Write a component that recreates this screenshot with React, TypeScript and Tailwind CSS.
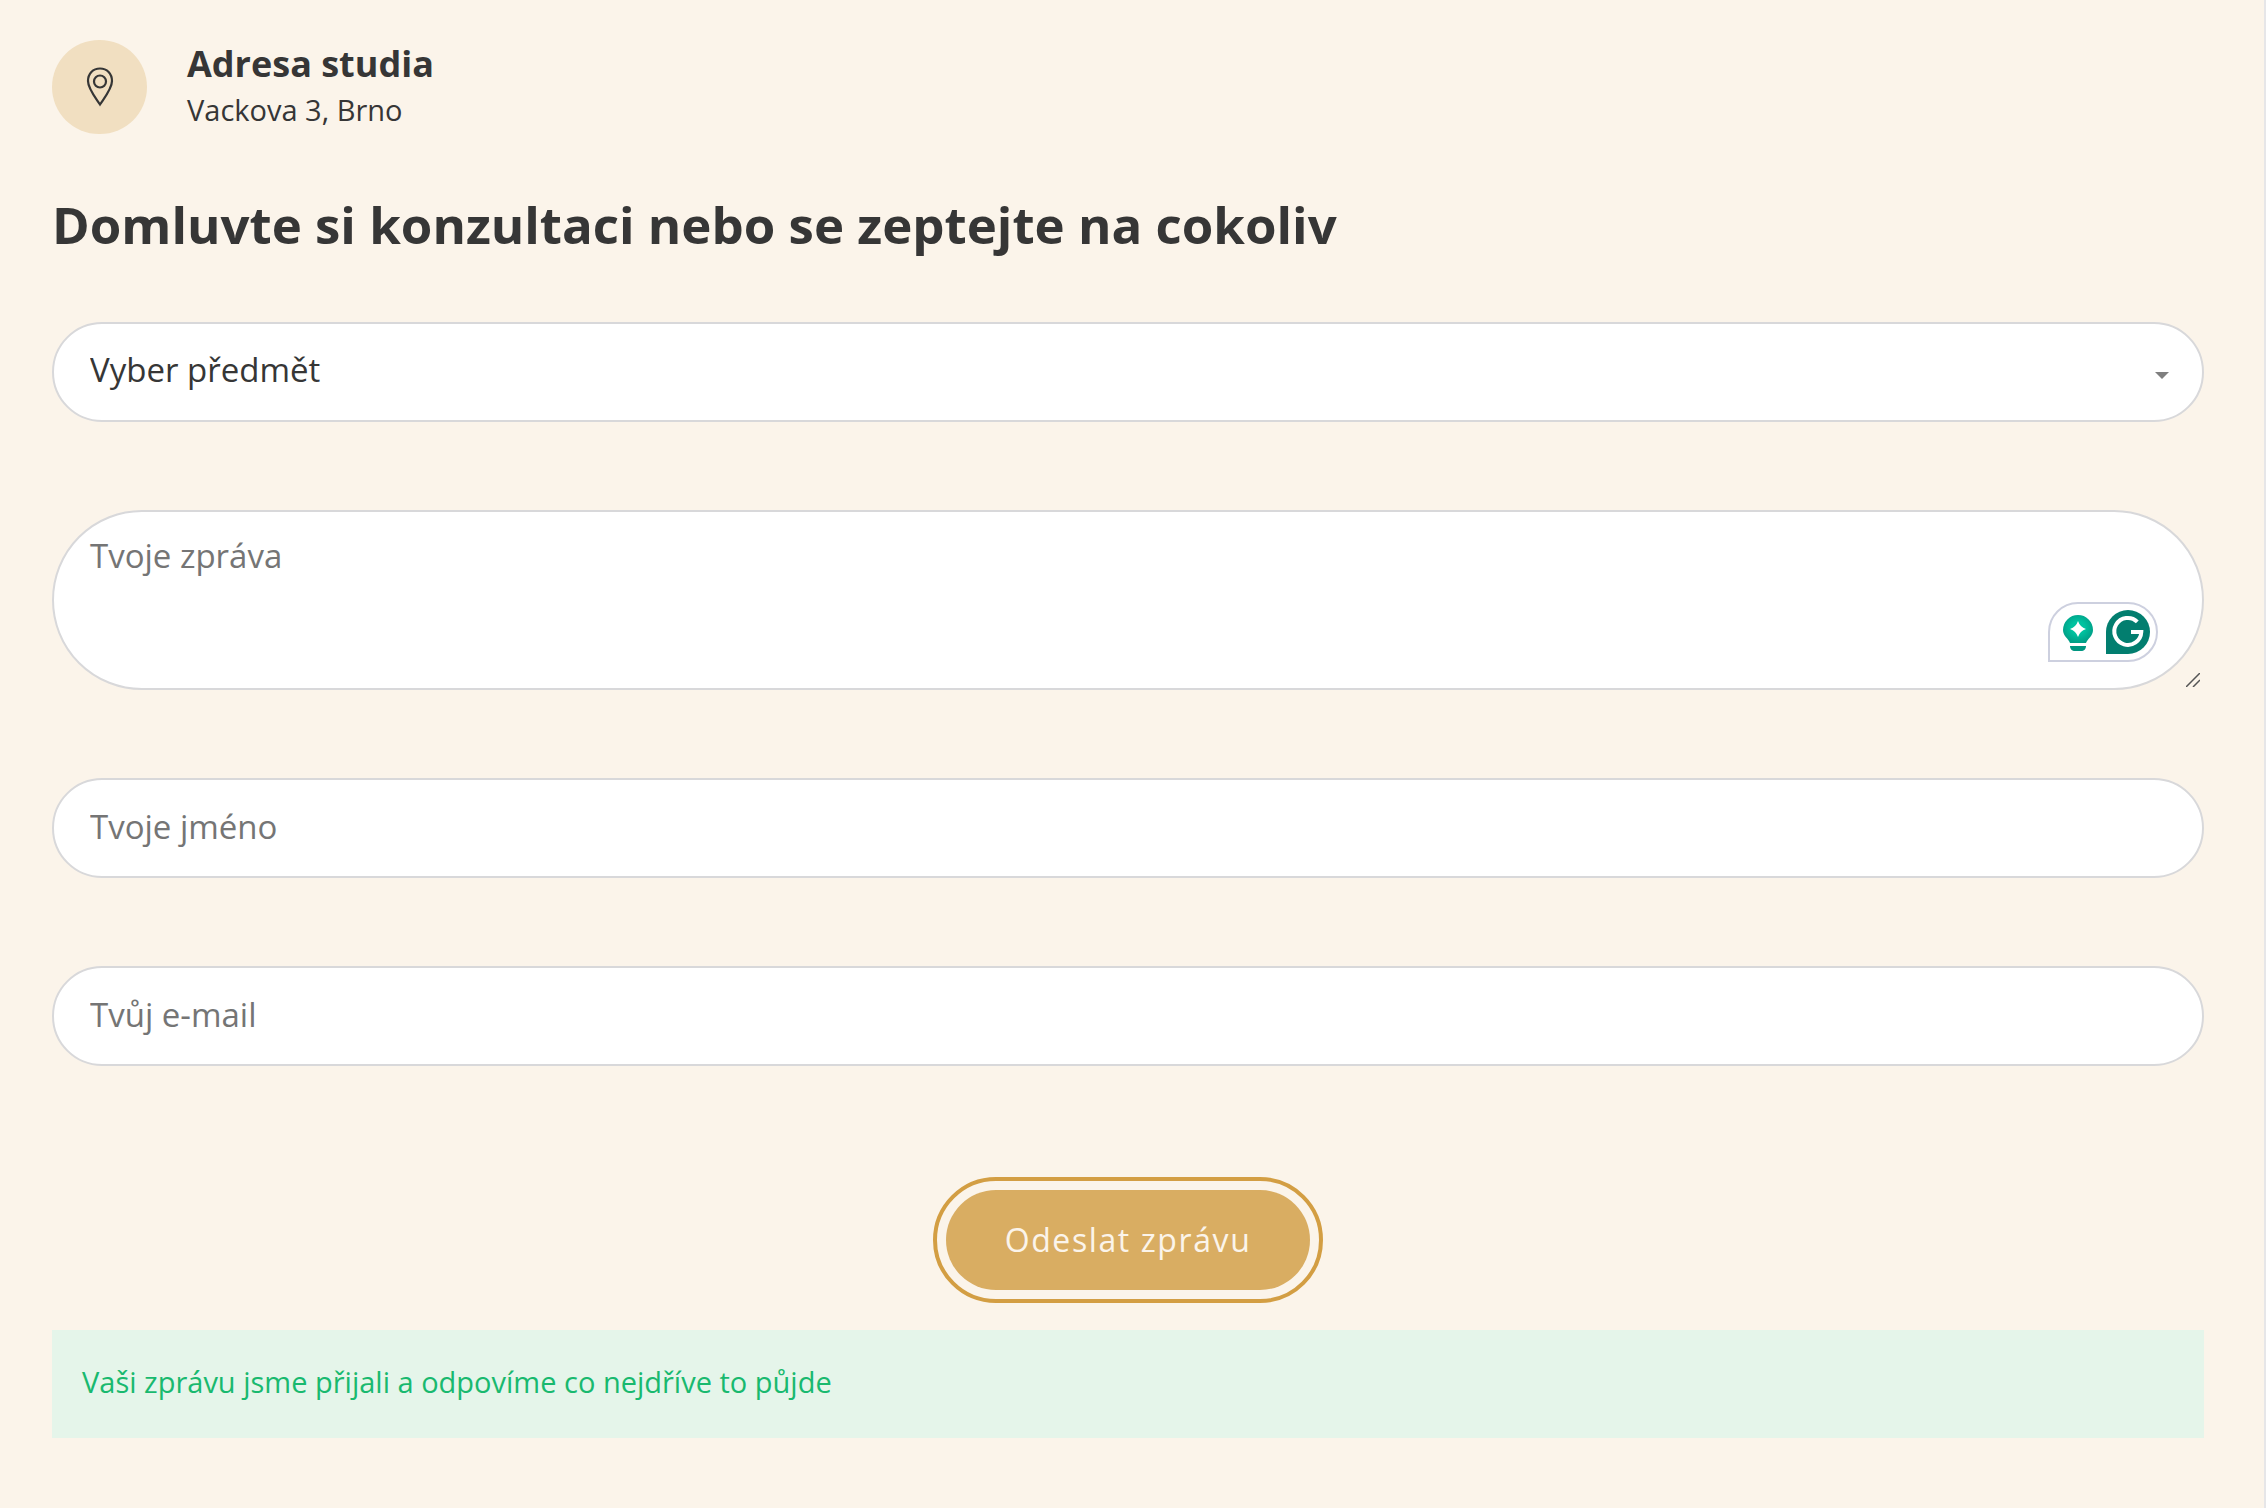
const fieldClass =
  "block w-full border-2 border-[#d8d8da] bg-white px-9 text-[33px] text-[#363636] placeholder:text-[#757575] placeholder:opacity-100 focus:outline-none";

function PinIcon() {
  return (
    <svg
      viewBox="0 0 40 50"
      className="h-[50px] w-10"
      fill="none"
      stroke="#363636"
      strokeWidth="2.2"
    >
      <path d="M20 6.500c7 0 12 5 12 12.500c0 7.500-7 16-12 23.500c-5-7.500-12-16-12-23.500c0-7.500 5-12.500 12-12.500z" />
      <circle cx="20" cy="19.500" r="6" />
    </svg>
  );
}

function WritingBadge() {
  return (
    <svg
      viewBox="0 0 110 60"
      className="absolute right-[46px] bottom-7 h-[60px] w-[110px]"
    >
      <defs>
        <radialGradient id="bulb" cx="50%" cy="45%" r="55%">
          <stop offset="0.4" stopColor="#00c2a0" />
          <stop offset="1" stopColor="#009e86" />
        </radialGradient>
      </defs>
      <path
        d="M1 59V30A29 29 0 0 1 30 1H80A29 29 0 0 1 80 59Z"
        fill="#fff"
        stroke="#cdd0df"
        strokeWidth="2"
      />
      <path
        d="M30 13a15 15 0 0 1 15 15c0 6-5 8-7 13H22c-2-5-7-7-7-13a15 15 0 0 1 15-15z"
        fill="url(#bulb)"
      />
      <path d="M22 44h16c0 3-2 5-5 5h-6c-3 0-5-2-5-5z" fill="#009680" />
      <path d="M30 19q2 6 8 8q-6 2-8 8q-2-6-8-8q6-2 8-8z" fill="#fff" />
      <path d="M58 52V30A22 22 0 1 1 80 52Z" fill="#027e6f" />
      <path
        d="M89.300 19.800A13.500 13.500 0 1 0 93.300 30H83"
        fill="none"
        stroke="#fff"
        strokeWidth="4"
      />
    </svg>
  );
}

export default function App() {
  return (
    <main className="min-h-screen border-r-2 border-[#e6e6e8] bg-[#fbf4ea] pt-10 pr-[60px] pb-[69px] pl-[52px] font-['Open_Sans','Noto_Sans',sans-serif] text-[#363636]">
      {/* Address */}
      <div className="flex items-center gap-10">
        <div className="flex h-[94px] w-[95px] shrink-0 items-center justify-center rounded-full bg-[#f1dfc1]">
          <PinIcon />
        </div>
        <div className="pb-0.5">
          <h3 className="text-[36px] leading-[48px] font-bold">Adresa studia</h3>
          <p className="text-[29px] leading-[44px]">Vackova 3, Brno</p>
        </div>
      </div>

      <h2 className="mt-[54px] text-[51px] leading-[72px] font-bold">
        Domluvte si konzultaci nebo se zeptejte na cokoliv
      </h2>

      {/* Contact form */}
      <form className="mt-[62px]" onSubmit={(e) => e.preventDefault()}>
        <div className="flex flex-col gap-[88px]">
          <div className="relative">
            <select
              aria-label="Vyber předmět"
              className={`${fieldClass} h-[100px] appearance-none rounded-full pb-1`}
            >
              <option>Vyber předmět</option>
            </select>
            <svg
              viewBox="0 0 14 7"
              className="pointer-events-none absolute top-[50px] right-[35px] h-[7px] w-[14px]"
            >
              <path d="M0 0H14L7 7Z" fill="#7f7f7f" />
            </svg>
          </div>

          <div className="relative">
            <textarea
              aria-label="Tvoje zpráva"
              placeholder="Tvoje zpráva"
              className={`${fieldClass} h-[180px] resize-none rounded-[90px] pt-5 leading-[48px]`}
            />
            <WritingBadge />
            <svg
              viewBox="0 0 14 14"
              className="pointer-events-none absolute right-1 bottom-[3px] size-[14px]"
              stroke="#555"
              strokeWidth="1.500"
            >
              <path d="M0 14L14 0M7 14L14 7" />
            </svg>
          </div>

          <input
            type="text"
            aria-label="Tvoje jméno"
            placeholder="Tvoje jméno"
            className={`${fieldClass} h-[100px] rounded-full pb-1`}
          />

          <input
            type="email"
            aria-label="Tvůj e-mail"
            placeholder="Tvůj e-mail"
            className={`${fieldClass} h-[100px] rounded-full pb-1`}
          />
        </div>

        <div className="mt-[124px] flex justify-center">
          <button
            type="submit"
            className="h-[100px] rounded-full bg-[#d9ad62] px-[59px] text-[32px] tracking-wider text-[#fbf4ea] outline-4 outline-offset-[9px] outline-[#d39e43]"
          >
            Odeslat zprávu
          </button>
        </div>

        <p
          role="status"
          className="mt-10 bg-[#e5f5ea] px-[30px] pt-7 pb-8 text-[29px] leading-[48px] text-[#19b96f]"
        >
          Vaši zprávu jsme přijali a odpovíme co nejdříve to půjde
        </p>
      </form>
    </main>
  );
}
